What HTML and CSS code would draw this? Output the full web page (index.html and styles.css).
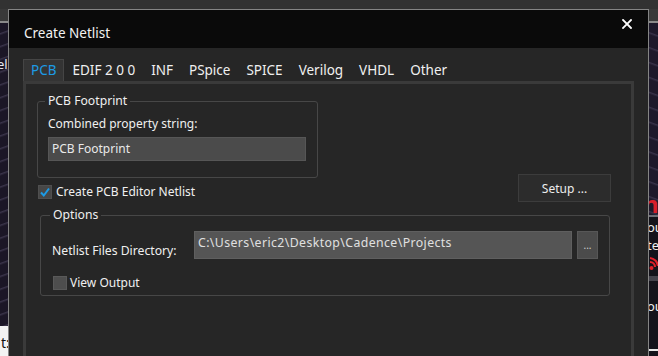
FILE: index.html
```html
<!DOCTYPE html>
<html>
<head>
<meta charset="utf-8">
<title>Create Netlist</title>
<link rel="stylesheet" href="styles.css">
</head>
<body>
<div class="screen">
  <div class="topbar"></div>
  <div class="main">
    <div class="desk-left">
      <div class="dk-gray"></div>
      <div class="dk-line"></div>
      <div class="dl-purple">
        <span class="dl-text">el</span>
      </div>
      <div class="dl-white"><span class="dl-wtext">t:</span></div>
    </div>

    <div class="dialog">
      <div class="titlebar">
        <span class="title">Create Netlist</span>
        <svg class="close" width="10" height="10" viewBox="0 0 10 10">
          <path d="M1 1 L9 9 M9 1 L1 9" stroke="#ffffff" stroke-width="1.8" stroke-linecap="square" fill="none"/>
        </svg>
      </div>
      <div class="body">
        <div class="tabs">
          <span class="tab active">PCB</span>
          <span class="tab">EDIF 2 0 0</span>
          <span class="tab">INF</span>
          <span class="tab">PSpice</span>
          <span class="tab">SPICE</span>
          <span class="tab">Verilog</span>
          <span class="tab">VHDL</span>
          <span class="tab">Other</span>
        </div>
        <div class="panel">
          <fieldset class="group fp">
            <legend>PCB Footprint</legend>
            <div class="label">Combined property string:</div>
            <div class="input fp-input">PCB Footprint</div>
          </fieldset>

          <div class="check-row">
            <div class="check main-check">
              <span class="box checked">
                <svg width="14" height="14" viewBox="0 0 14 14">
                  <path d="M3 7.5 L5.8 10.5 L11 3.5" stroke="#1c9be6" stroke-width="2" fill="none"/>
                </svg>
              </span>
              <span>Create PCB Editor Netlist</span>
            </div>
            <div class="btn setup">Setup ...</div>
          </div>

          <fieldset class="group options">
            <legend>Options</legend>
            <div class="dir-row">
              <span class="dir-label">Netlist Files Directory:</span>
              <div class="input dir-input">C:\Users\eric2\Desktop\Cadence\Projects</div>
              <div class="btn browse">...</div>
            </div>
            <div class="check view-check">
              <span class="box"></span>
              <span>View Output</span>
            </div>
          </fieldset>
        </div>
      </div>
    </div>

    <div class="desk-right">
      <div class="dk-gray"></div>
      <div class="dk-line"></div>
      <div class="dr-purple"><span class="dr-red">n</span></div>
      <div class="dr-sep"></div>
      <div class="dr-dark">
        <span class="dr-text">ou</span>
        <span class="dr-text">te</span>
        <svg class="dr-icon" width="9" height="18" viewBox="0 0 9 18">
          <path d="M1 4 A9 9 0 0 1 9 12" stroke="#e0202a" stroke-width="2.2" fill="none"/>
          <path d="M1 8 A5 5 0 0 1 6 13" stroke="#e0202a" stroke-width="2.2" fill="none"/>
          <circle cx="2.5" cy="14" r="2" fill="#e0202a"/>
        </svg>
      </div>
      <div class="dr-sep2"></div>
      <div class="dr-dark2">
        <span class="dr-text">ou</span>
      </div>
      <div class="dr-white"></div>
      <div class="dr-rest"></div>
    </div>
  </div>
</div>
</body>
</html>
```

FILE: styles.css
```css
* { box-sizing: border-box; }
html, body { margin: 0; padding: 0; }
body {
  width: 658px;
  height: 356px;
  overflow: hidden;
  background: #323232;
  font-family: "Noto Sans", "Open Sans", sans-serif;
  font-size: 12px;
  color: #f0f0f0;
}
.screen { display: flex; flex-direction: column; height: 356px; }
.topbar { height: 9px; flex: none; background: #323232; }
.main { display: flex; flex: 1; min-height: 0; }

/* desktop behind, left */
.desk-left { width: 8px; flex: none; display: flex; flex-direction: column; overflow: hidden; }
.dk-gray { height: 12px; flex: none; background: #393939; }
.dk-line { height: 2px; flex: none; background: #8a8a8a; }
.dl-purple {
  flex: 1;
  background:
    repeating-linear-gradient(160deg, rgba(150,140,180,0.0) 0px, rgba(150,140,180,0.0) 9px, rgba(150,140,180,0.25) 10px, rgba(150,140,180,0.0) 12px),
    #1b1626;
  overflow: hidden;
  padding-top: 33px;
}
.dl-text { display: block; color: #e8e8f0; font-size: 13px; line-height: 16px; margin-left: -3px; white-space: nowrap; }
.dl-white { height: 30px; flex: none; background: #f3f3f3; overflow: hidden; padding-top: 9px; }
.dl-wtext { display: block; color: #111; font-size: 14px; line-height: 16px; margin-left: 1px; }

/* desktop behind, right */
.desk-right { width: 9px; flex: none; display: flex; flex-direction: column; overflow: hidden; }
.dr-purple {
  height: 192px;
  flex: none;
  background:
    repeating-linear-gradient(200deg, rgba(150,140,180,0.0) 0px, rgba(150,140,180,0.0) 11px, rgba(150,140,180,0.22) 12px, rgba(150,140,180,0.0) 14px),
    #1d192b;
  display: flex;
  flex-direction: column;
  justify-content: flex-end;
  overflow: hidden;
}
.dr-red { color: #d81f2c; font-size: 24px; font-weight: bold; line-height: 22px; margin-left: -6px; }
.dr-sep { height: 2px; flex: none; background: #6f6f78; }
.dr-dark { height: 59px; flex: none; background: #14131b; display: flex; flex-direction: column; padding-top: 1px; overflow: hidden; }
.dr-text { color: #f0f0f0; font-size: 13px; line-height: 18px; white-space: nowrap; margin-left: -2px; }
.dr-icon { flex: none; }
.dr-sep2 { height: 5px; flex: none; background: #44434c; }
.dr-dark2 { height: 68px; flex: none; background: #14131b; padding-top: 16px; display: flex; flex-direction: column; overflow: hidden; }
.dr-white { height: 2px; flex: none; background: #e8e8e8; }
.dr-rest { flex: 1; background: #14131b; }

/* dialog */
.dialog {
  width: 641px;
  flex: none;
  border: 1px solid #858585;
  border-bottom: none;
  display: flex;
  flex-direction: column;
  background: #262626;
}
.titlebar {
  height: 38px;
  flex: none;
  background: #0a0a0a;
  display: flex;
  align-items: flex-start;
  justify-content: space-between;
  padding: 0 16px 0 15px;
}
.title { font-size: 13.5px; line-height: 18px; margin-top: 14px; color: #f2f2f2; }
.close { margin-top: 9px; }

.body { flex: 1; padding: 11px 14px 0 14px; display: flex; flex-direction: column; }

.tabs { display: flex; height: 22px; flex: none; }
.tab {
  font-size: 13.5px;
  line-height: 21px;
  height: 22px;
  padding: 0 7px;
  border: 1px solid transparent;
  border-bottom: none;
  color: #f0f0f0;
  white-space: nowrap;
}
.tab.active { background: #343434; border-color: #454545; color: #1c9be6; }

.panel {
  flex: 1;
  border: 3px solid #3a3a3a;
  border-bottom: none;
  display: flex;
  flex-direction: column;
  align-items: flex-start;
}

.group {
  margin: 0;
  border: 1px solid #474747;
  border-radius: 3px;
  min-width: 0;
}
.group legend {
  padding: 0 3px;
  margin-left: -3px;
  line-height: 16px;
  font-size: 12.2px;
  color: #f0f0f0;
}
.fp { width: 281px; margin: 9px 0 0 11px; padding: 7px 10px 16px 10px; }
.label { line-height: 16px; font-size: 12px; }
.input {
  background: #4b4b4b;
  border: 1px solid #565656;
  color: #e9e9e9;
  font-size: 12px;
  white-space: nowrap;
  overflow: hidden;
}
.fp-input { width: 258px; height: 24px; margin-top: 5px; line-height: 22px; padding-left: 3px; }

.check-row { display: flex; align-items: flex-start; justify-content: space-between; width: 100%; margin-top: -4px; padding: 0 20px 0 12px; }
.check { display: flex; align-items: center; height: 16px; line-height: 16px; gap: 4px; }
.main-check { margin-top: 10px; }
.box {
  width: 14px;
  height: 14px;
  flex: none;
  background: #4e4e4e;
  border: 1px solid #595959;
  display: block;
}
.box.checked { background: #474747; border-color: #4f4f4f; }
.box svg { display: block; margin: -1px; }

.btn {
  display: flex;
  align-items: center;
  justify-content: center;
  font-size: 12px;
  color: #ececec;
}
.setup { width: 93px; height: 28px; background: #2c2c2c; border: 1px solid #3c3c3c; }

.options { width: 570px; margin: 5px 0 0 14px; padding: 8px 11px 4px 11px; }
.options legend { margin-left: -2px; }
.dir-row { display: flex; align-items: flex-end; height: 28px; }
.dir-label { width: 142px; flex: none; line-height: 16px; font-size: 12.2px; white-space: nowrap; }
.dir-input { width: 378px; height: 28px; flex: none; background: #555555; border-color: #5f5f5f; line-height: 16px; padding: 3px 0 0 3px; color: #e0e0e0; font-size: 12.3px; letter-spacing: 0.4px; }
.browse { width: 21px; height: 28px; margin-left: 5px; background: #4b4b4b; border: 1px solid #575757; color: #d0d0d0; font-size: 10px; align-items: flex-end; padding-bottom: 6px; }
.view-check { margin: 16px 0 0 1px; gap: 3px; }
```
